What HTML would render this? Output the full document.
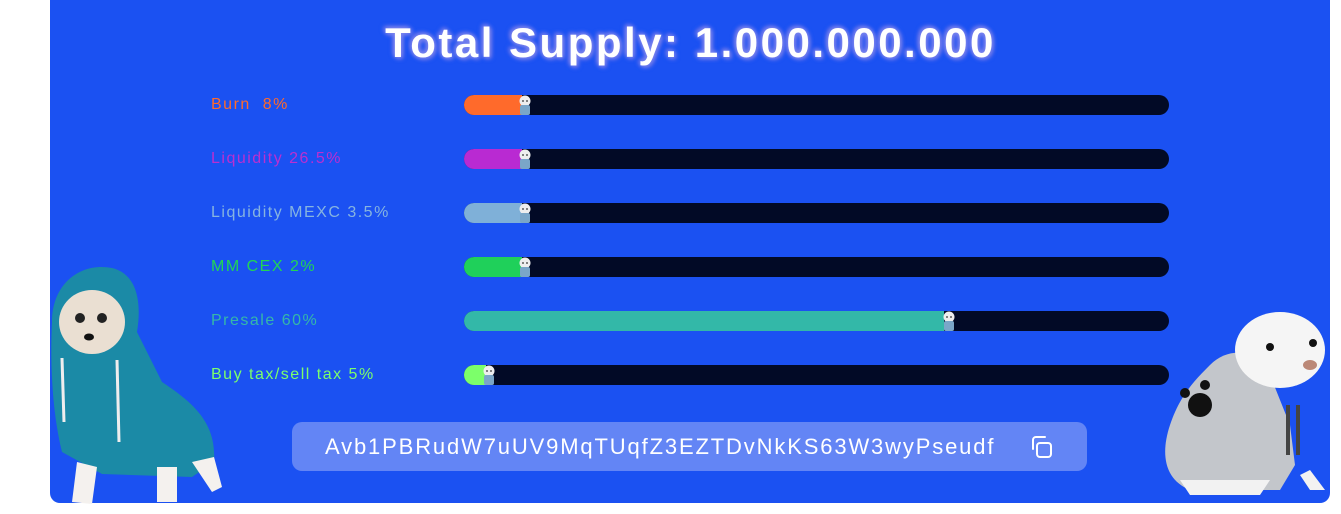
<!DOCTYPE html>
<html><head><style>
body{margin:0;width:1341px;height:514px;background:#fff;position:relative;overflow:hidden;font-family:"Comic Sans MS","Liberation Sans",sans-serif}
.panel{position:absolute;left:50px;top:0;width:1280px;height:503px;background:#1b51f2;border-radius:0 0 10px 10px}
h1{position:absolute;left:40px;width:1301px;top:19px;margin:0;text-align:center;color:#fff;font-size:42px;font-weight:bold;letter-spacing:2.5px;text-shadow:0 0 4px #7b86f0,0 0 6px #7b86f0,2px 2px 4px #6670e8,-2px -2px 4px #6670e8}
.lab{position:absolute;left:211px;font-size:16px;letter-spacing:1.5px}
.bar{position:absolute;left:464px;width:705px;height:20px;background:#020a26;border-radius:10px;overflow:visible}
.fill{position:absolute;left:0;top:0;height:20px;border-radius:10px 0 0 10px}
.pup{position:absolute;top:0;width:18px;height:20px}
.addr{position:absolute;left:292px;top:422px;width:795px;height:49px;background:#6385f5;border-radius:10px;color:#fff;font-size:22px;line-height:49px;letter-spacing:1.85px}
</style></head><body>
<div class="panel"></div>
<h1>Total Supply: 1.000.000.000</h1>

<div class="lab" style="top:96px;color:#ff6a2b">Burn&nbsp; 8%</div>
<div class="lab" style="top:150px;color:#bb2fd0">Liquidity 26.5%</div>
<div class="lab" style="top:204px;color:#86b4e0">Liquidity MEXC 3.5%</div>
<div class="lab" style="top:258px;color:#22d455">MM CEX 2%</div>
<div class="lab" style="top:312px;color:#35b8a8">Presale 60%</div>
<div class="lab" style="top:366px;color:#7cff6a">Buy tax/sell tax 5%</div>

<svg width="0" height="0" style="position:absolute"><defs><g id="pp"><circle cx="9" cy="6" r="5.5" fill="#eee"/><circle cx="7" cy="6" r="0.9" fill="#333"/><circle cx="11" cy="6" r="0.9" fill="#333"/><rect x="4" y="10" width="10" height="10" rx="2" fill="#7aa6c8"/></g></defs></svg>

<div class="bar" style="top:95px"><div class="fill" style="width:58px;background:#ff6a2b"></div><svg class="pup" style="left:52px"><use href="#pp"/></svg></div>
<div class="bar" style="top:149px"><div class="fill" style="width:58px;background:#b92ad2"></div><svg class="pup" style="left:52px"><use href="#pp"/></svg></div>
<div class="bar" style="top:203px"><div class="fill" style="width:58px;background:#7fb0d8"></div><svg class="pup" style="left:52px"><use href="#pp"/></svg></div>
<div class="bar" style="top:257px"><div class="fill" style="width:58px;background:#1fd05a"></div><svg class="pup" style="left:52px"><use href="#pp"/></svg></div>
<div class="bar" style="top:311px"><div class="fill" style="width:480px;background:#33b8a8"></div><svg class="pup" style="left:476px"><use href="#pp"/></svg></div>
<div class="bar" style="top:365px"><div class="fill" style="width:22px;background:#7cff6a"></div><svg class="pup" style="left:16px"><use href="#pp"/></svg></div>

<div class="addr"><span style="position:absolute;left:33px">Avb1PBRudW7uUV9MqTUqfZ3EZTDvNkKS63W3wyPseudf</span>
<svg style="position:absolute;left:737px;top:12px" width="26" height="26" viewBox="0 0 26 26" fill="none" stroke="#fff" stroke-width="2" stroke-linecap="round" stroke-linejoin="round"><rect x="8" y="9" width="14" height="14" rx="3"/><path d="M4 15V6a3 3 0 0 1 3-3h9"/></svg></div>

<svg style="position:absolute;left:42px;top:262px" width="185" height="248" viewBox="0 0 185 248">
<path d="M10 60 C10 20 40 0 70 6 C95 12 100 40 95 70 L120 120 C150 140 175 160 172 200 L150 215 L60 212 L20 190 C10 150 8 100 10 60Z" fill="#1b8aa6"/>
<ellipse cx="50" cy="60" rx="33" ry="32" fill="#eadfd2"/>
<circle cx="38" cy="56" r="5" fill="#222"/><circle cx="60" cy="56" r="5" fill="#222"/><ellipse cx="47" cy="75" rx="5" ry="3.5" fill="#111"/>
<path d="M20 96 L22 160" stroke="#eee" stroke-width="3"/><path d="M75 98 L77 180" stroke="#eee" stroke-width="3"/>
<path d="M35 200 L30 240 L50 242 L55 205Z M115 205 L115 240 L135 240 L135 205Z M150 200 L170 230 L180 225 L172 195Z" fill="#f4f1ee"/>
</svg>

<svg style="position:absolute;left:1160px;top:305px" width="175" height="190" viewBox="0 0 175 190">
<path d="M50 60 C70 40 100 45 110 70 L130 120 L135 160 L120 185 L30 185 C5 175 0 150 10 120 C20 90 35 75 50 60Z" fill="#c3c6cb"/>
<ellipse cx="120" cy="45" rx="45" ry="38" fill="#f5f5f5"/>
<circle cx="110" cy="42" r="4" fill="#111"/><circle cx="153" cy="38" r="4" fill="#111"/><ellipse cx="150" cy="60" rx="7" ry="5" fill="#b87"/>
<path d="M128 100 L128 150 M138 100 L138 150" stroke="#444" stroke-width="4"/>
<circle cx="40" cy="100" r="12" fill="#111"/><circle cx="25" cy="88" r="5" fill="#111"/><circle cx="45" cy="80" r="5" fill="#111"/>
<path d="M20 175 L30 190 L100 190 L110 175Z M140 170 L150 185 L165 185 L150 165Z" fill="#f2f2f2"/>
</svg>
</body></html>
